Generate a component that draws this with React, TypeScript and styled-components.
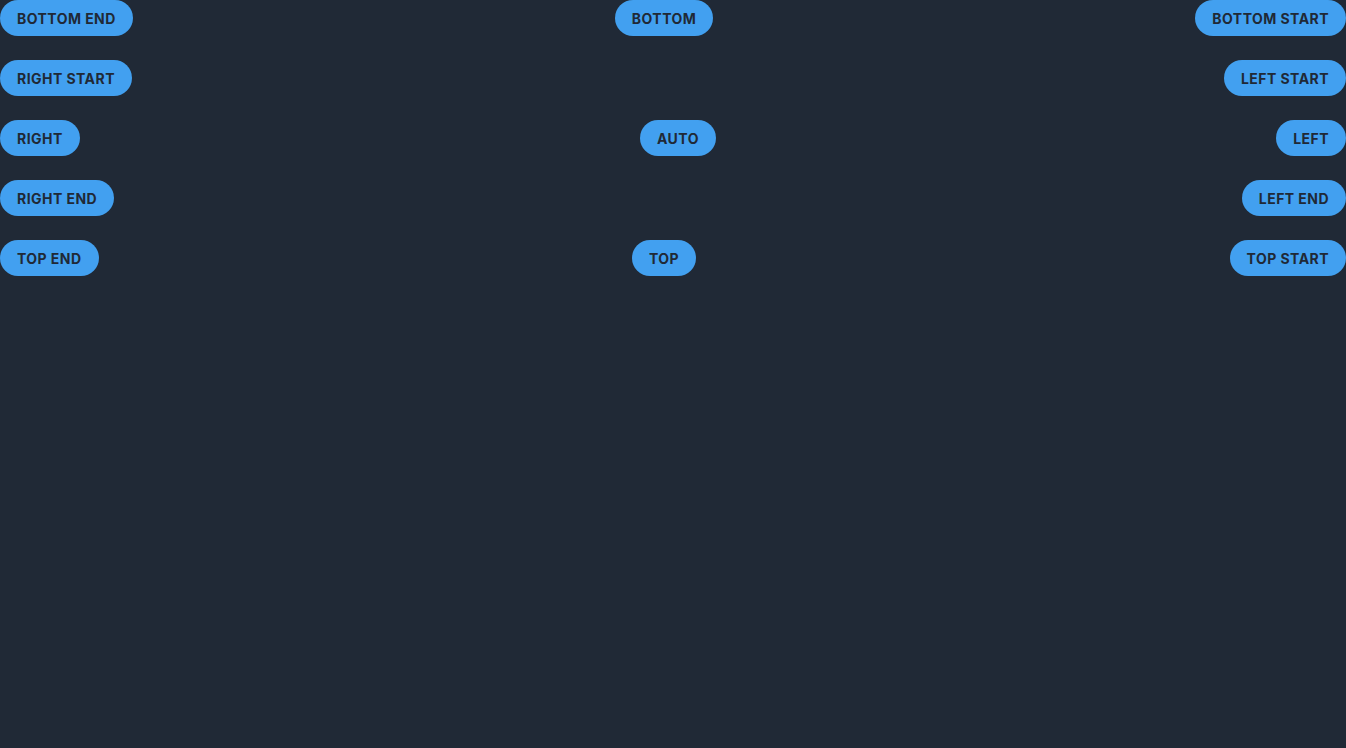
import React from 'react';
import styled, { createGlobalStyle } from 'styled-components';

const GlobalStyle = createGlobalStyle`
  html, body {
    margin: 0;
    padding: 0;
    background: #202936;
    min-height: 100%;
  }
  body {
    font-family: Inter, "Noto Sans", sans-serif;
  }
`;

const rows: string[][] = [
  ['Bottom End', 'Bottom', 'Bottom Start'],
  ['Right Start', 'Left Start'],
  ['Right', 'Auto', 'Left'],
  ['Right End', 'Left End'],
  ['Top End', 'Top', 'Top Start'],
];

const App: React.FC = () => (
  <>
    <GlobalStyle />
    <Page>
      {rows.map((row) => (
        <Row key={row.join('-')}>
          {row.map((label) => (
            <PlacementButton key={label} type="button">
              {label}
            </PlacementButton>
          ))}
        </Row>
      ))}
    </Page>
  </>
);

const Page = styled.div`
  display: flex;
  flex-direction: column;
  gap: 24px;
  width: 1346px;
  height: 748px;
  background: #202936;
`;

const Row = styled.div`
  display: flex;
  justify-content: space-between;
  align-items: center;
`;

const PlacementButton = styled.button`
  height: 36px;
  padding: 0 17px;
  border: none;
  border-radius: 18px;
  background: #42a0f0;
  color: #202936;
  font-family: Inter, "Noto Sans", sans-serif;
  font-size: 14px;
  font-weight: 700;
  letter-spacing: 0.45px;
  text-transform: uppercase;
  cursor: pointer;
`;

export default App;
